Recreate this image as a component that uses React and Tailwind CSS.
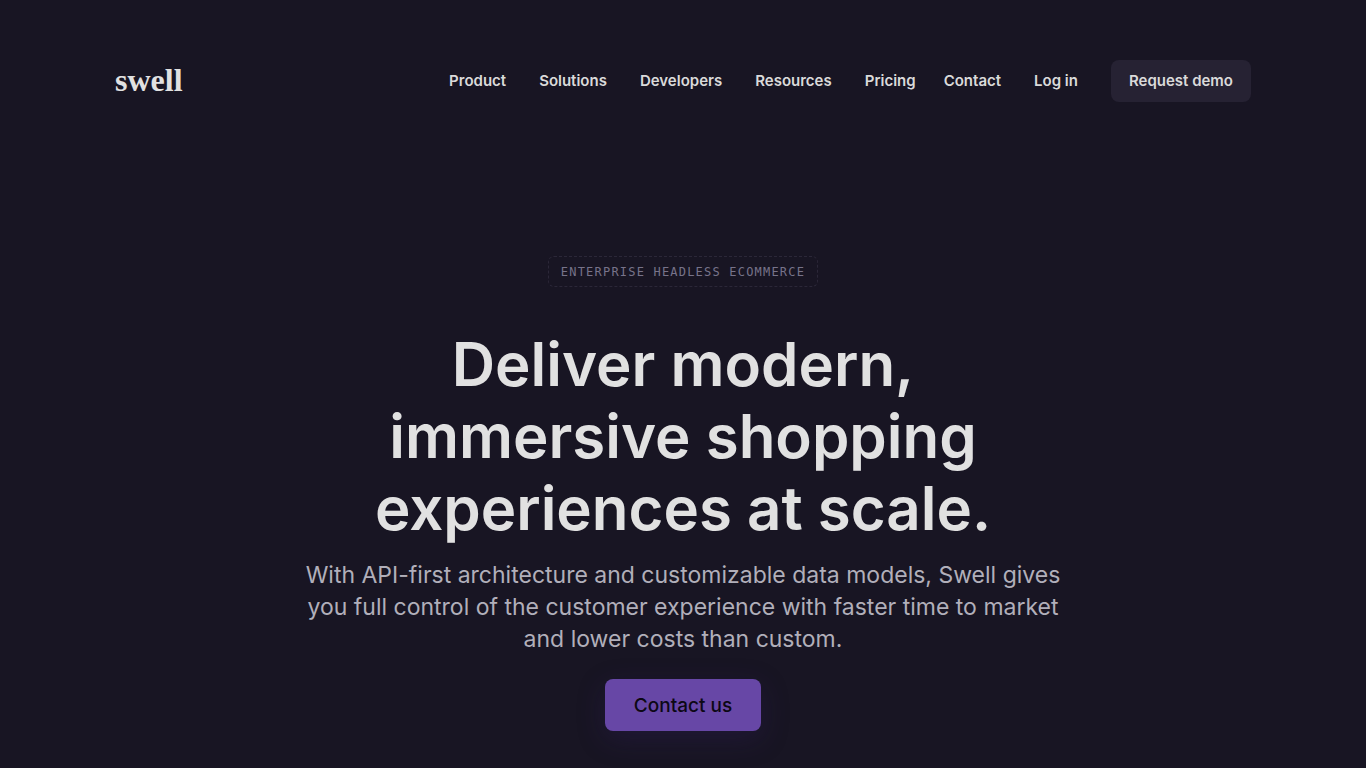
const productLinks = ["Product", "Solutions", "Developers", "Resources", "Pricing"];
const accountLinks = ["Contact", "Log in"];

function NavLink({ children }) {
  return (
    <a href="#" className="whitespace-nowrap hover:text-white">
      {children}
    </a>
  );
}

function Header() {
  return (
    <header className="mx-auto flex w-full max-w-[1136px] items-center justify-between pt-15">
      <a
        href="#"
        className="pb-0.5 font-['Liberation_Serif',serif] text-[32px] leading-8 font-bold text-[#e1e1e1]"
      >
        swell
      </a>
      <nav className="flex items-center gap-7 text-[15px] leading-6 font-semibold text-[#dadada]">
        <div className="flex items-center gap-[33px]">
          {productLinks.map((label) => (
            <NavLink key={label}>{label}</NavLink>
          ))}
        </div>
        <div className="flex items-center gap-[33px]">
          {accountLinks.map((label) => (
            <NavLink key={label}>{label}</NavLink>
          ))}
          <a
            href="#"
            className="rounded-lg bg-[#262233] px-[18px] py-[9px] whitespace-nowrap hover:bg-[#322d42]"
          >
            Request demo
          </a>
        </div>
      </nav>
    </header>
  );
}

function Hero() {
  return (
    <main className="mx-auto flex w-full max-w-[800px] flex-col items-center pt-[154px] pb-[37px] text-center">
      <p className="rounded-md border border-dashed border-[#2b2738] px-3 pt-[7px] pb-1.5 font-['DejaVu_Sans_Mono',monospace] text-xs leading-4 tracking-widest text-[#77738a] uppercase">
        Enterprise headless ecommerce
      </p>
      <h1 className="mt-[41px] text-[60px] leading-[72px] font-semibold text-[#e1e1e1]">
        Deliver modern,
        <br />
        immersive shopping
        <br />
        experiences at scale.
      </h1>
      <p className="mt-[15px] text-[23px] leading-8 text-[#b1afba]">
        With API-first architecture and customizable data models, Swell gives
        <br />
        you full control of the customer experience with faster time to market
        <br />
        and lower costs than custom.
      </p>
      <a
        href="#"
        className="mt-6 rounded-lg bg-[#6747a6] px-[29px] pt-[13px] pb-[11px] text-[19px] leading-7 font-medium text-[#0c0814] shadow-[0_8px_28px_rgba(55,30,110,0.25)] hover:bg-[#7453b5]"
      >
        Contact us
      </a>
    </main>
  );
}

export default function App() {
  return (
    <div className="min-h-screen bg-[#181523] px-6 font-['Inter',sans-serif]">
      <Header />
      <Hero />
    </div>
  );
}
